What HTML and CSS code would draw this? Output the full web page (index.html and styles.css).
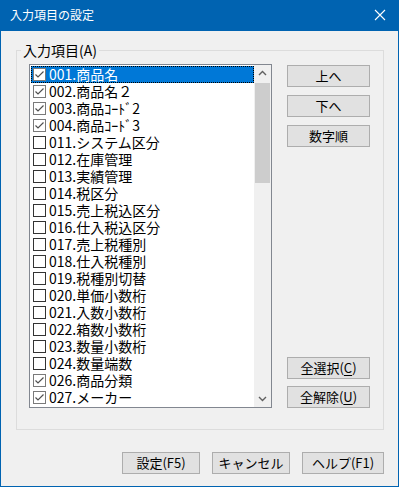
FILE: index.html
```html
<!DOCTYPE html>
<html>
<head>
    <meta charset="utf-8">
    <meta name="viewport" content="width=device-width, initial-scale=1.0">
    <link rel="stylesheet" href="styles.css">
</head>
<body>
    <div class="window">
        <div class="titlebar">
            <span class="title">入力項目の設定</span>
            <svg class="close" width="12" height="12" viewBox="0 0 12 12">
                <path d="M1 1 L11 11 M11 1 L1 11" stroke="#fff" stroke-width="1.1" fill="none"/>
            </svg>
        </div>

        <div class="content">
            <div class="group">
                <span class="group-label">入力項目(A)</span>
                <div class="listbox">
                    <div class="rows" id="rows"></div>
                    <div class="scrollbar">
                        <div class="arrow">
                            <svg width="17" height="17" viewBox="0 0 17 17"><path d="M5 10 L8.5 6.5 L12 10" stroke="#606060" stroke-width="1.4" fill="none"/></svg>
                        </div>
                        <div class="track"><div class="thumb"></div></div>
                        <div class="arrow">
                            <svg width="17" height="17" viewBox="0 0 17 17"><path d="M5 7 L8.5 10.5 L12 7" stroke="#606060" stroke-width="1.4" fill="none"/></svg>
                        </div>
                    </div>
                </div>
                <div class="side">
                    <div class="btn-stack">
                        <button class="btn">上へ</button>
                        <button class="btn">下へ</button>
                        <button class="btn">数字順</button>
                    </div>
                    <div class="btn-stack tight">
                        <button class="btn">全選択(<u>C</u>)</button>
                        <button class="btn">全解除(<u>U</u>)</button>
                    </div>
                </div>
            </div>

            <div class="footer">
                <button class="btn wide">設定(F5)</button>
                <button class="btn wide">キャンセル</button>
                <button class="btn wide help">ヘルプ(F1)</button>
            </div>
        </div>
    </div>

    <script>
        const items = [
            ['001.商品名', true],
            ['002.商品名２', true],
            ['003.商品ｺｰﾄﾞ2', true],
            ['004.商品ｺｰﾄﾞ3', true],
            ['011.システム区分', false],
            ['012.在庫管理', false],
            ['013.実績管理', false],
            ['014.税区分', false],
            ['015.売上税込区分', false],
            ['016.仕入税込区分', false],
            ['017.売上税種別', false],
            ['018.仕入税種別', false],
            ['019.税種別切替', false],
            ['020.単価小数桁', false],
            ['021.入数小数桁', false],
            ['022.箱数小数桁', false],
            ['023.数量小数桁', false],
            ['024.数量端数', false],
            ['026.商品分類', true],
            ['027.メーカー', true]
        ];

        const rows = document.getElementById('rows');
        const check = '<svg width="13" height="13" viewBox="0 0 13 13"><path d="M2.5 6.5 L5 9 L10.5 3.5" stroke="#505050" stroke-width="1.2" fill="none"/></svg>';

        items.forEach((item, i) => {
            const row = document.createElement('div');
            row.className = 'row' + (i === 0 ? ' selected' : '');
            const box = document.createElement('span');
            box.className = 'box' + (item[1] ? ' checked' : '');
            if (item[1]) box.innerHTML = check;
            const label = document.createElement('span');
            label.className = 'label';
            label.textContent = item[0];
            row.appendChild(box);
            row.appendChild(label);
            rows.appendChild(row);
        });
    </script>
</body>
</html>
```

FILE: styles.css
```css
body {
    margin: 0;
    font-family: "Noto Sans CJK JP", "Noto Sans", sans-serif;
    background: #fff;
}
.window {
    width: 399px;
    height: 487px;
    box-sizing: border-box;
    border: 1px solid #0063b1;
    border-top: none;
    background: #f0f0f0;
    display: flex;
    flex-direction: column;
}
.titlebar {
    height: 31px;
    background: #0063b1;
    color: #fff;
    display: flex;
    align-items: center;
    justify-content: space-between;
    padding: 0 9px 0 9px;
    box-sizing: border-box;
}
.title {
    font-size: 12px;
    line-height: 16px;
    margin-top: -1px;
}
.close {
    margin-right: 3px;
    margin-top: -1px;
}
.content {
    padding: 19px 14px 0 15px;
}
.group {
    position: relative;
    display: flex;
    border: 1px solid #dcdcdc;
    padding: 13px 13px 21px 12px;
}
.group-label {
    position: absolute;
    left: 4px;
    top: -10px;
    padding: 0 2px;
    background: #f0f0f0;
    font-size: 14px;
    line-height: 18px;
    color: #000;
}
.listbox {
    width: 243px;
    height: 344px;
    box-sizing: border-box;
    border: 1px solid #828790;
    background: #fff;
    display: flex;
}
.rows {
    width: 223px;
    padding: 1px 0 0 1px;
}
.row {
    height: 17px;
    display: flex;
    align-items: center;
    padding-left: 2px;
    box-sizing: border-box;
    font-size: 14px;
    line-height: 17px;
    color: #000;
    white-space: nowrap;
}
.row.selected {
    background: #0078d7;
    color: #fff;
    outline: 1px dotted #000;
    outline-offset: -1px;
}
.box {
    width: 13px;
    height: 13px;
    box-sizing: border-box;
    border: 1px solid #333;
    background: #fff;
    flex: none;
    margin-right: 3px;
    position: relative;
}
.box.checked {
    border-color: #7a7a7a;
}
.box svg {
    position: absolute;
    left: -1px;
    top: -1px;
}
.label {
    line-height: 17px;
}
.scrollbar {
    width: 17px;
    display: flex;
    flex-direction: column;
    background: #f0f0f0;
}
.arrow {
    height: 17px;
}
.arrow svg {
    display: block;
}
.track {
    flex: 1;
}
.thumb {
    margin: 1px 1px 0 1px;
    height: 100px;
    background: #cdcdcd;
}
.side {
    margin-left: 15px;
    padding-top: 1px;
    display: flex;
    flex-direction: column;
    justify-content: space-between;
}
.btn-stack {
    display: flex;
    flex-direction: column;
    gap: 8px;
}
.btn-stack.tight {
    gap: 7px;
}
.btn {
    width: 83px;
    height: 22px;
    box-sizing: border-box;
    border: 1px solid #adadad;
    background: #e1e1e1;
    color: #000;
    font-family: "Noto Sans CJK JP", "Noto Sans", sans-serif;
    font-size: 13px;
    line-height: 18px;
    padding: 0;
}
.btn u {
    text-decoration-thickness: 1px;
    text-underline-offset: 2px;
}
.footer {
    display: flex;
    justify-content: flex-end;
    gap: 12px;
    margin-top: 22px;
}
.btn.wide {
    width: 78px;
}
.btn.wide.help {
    width: 82px;
}
```
